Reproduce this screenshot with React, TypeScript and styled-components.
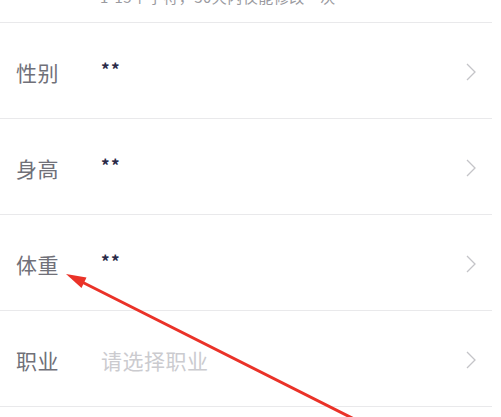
import styled, { createGlobalStyle } from "styled-components";

const GlobalStyle = createGlobalStyle`
  html, body {
    margin: 0;
    padding: 0;
    background: #ffffff;
    font-family: "Noto Sans CJK SC", "Noto Sans", sans-serif;
  }
`;

const Page = styled.main`
  position: relative;
  width: 501px;
  height: 417px;
  overflow: hidden;
  background: #ffffff;
`;

const List = styled.section`
  display: flex;
  flex-direction: column;
  padding-right: 9px;
`;

const Hint = styled.div`
  height: 22px;
  display: flex;
  align-items: flex-end;
  padding: 0 0 18px 100px;
  box-sizing: border-box;
  font-size: 15px;
  line-height: 15px;
  letter-spacing: 0.5px;
  color: #9a9aa0;
  white-space: nowrap;
`;

const Row = styled.div`
  height: 96px;
  box-sizing: border-box;
  border-top: 1px solid #e9e9eb;
  display: flex;
  align-items: center;
  padding: 2px 15px 0 16px;
`;

const Label = styled.span`
  width: 85px;
  flex-shrink: 0;
  font-size: 21px;
  color: #707078;
  letter-spacing: 0.5px;
`;

const Value = styled.span<{ $placeholder?: boolean }>`
  flex: 1;
  font-size: ${(p) => (p.$placeholder ? "21px" : "17px")};
  font-weight: ${(p) => (p.$placeholder ? 400 : 700)};
  color: ${(p) => (p.$placeholder ? "#cbcbcf" : "#2a2a48")};
  letter-spacing: ${(p) => (p.$placeholder ? "0.5px" : "1.5px")};
  margin-top: ${(p) => (p.$placeholder ? "0" : "-6px")};
`;

const Chevron = styled.svg`
  width: 12px;
  height: 18px;
  flex-shrink: 0;
`;

const Overlay = styled.svg`
  position: absolute;
  inset: 0;
  pointer-events: none;
`;

const rows = [
  { label: "性别", value: "**" },
  { label: "身高", value: "**" },
  { label: "体重", value: "**" },
  { label: "职业", value: "请选择职业", placeholder: true },
];

function Arrow() {
  return (
    <Chevron viewBox="0 0 12 18">
      <polyline points="2,1 10,9 2,17" fill="none" stroke="#c4c4c8" strokeWidth="1.3" />
    </Chevron>
  );
}

export default function App() {
  return (
    <>
      <GlobalStyle />
      <Page>
        <List>
          <Hint>1-15个字符，30天内仅能修改一次</Hint>
          {rows.map((row) => (
            <Row key={row.label}>
              <Label>{row.label}</Label>
              <Value $placeholder={row.placeholder}>{row.value}</Value>
              <Arrow />
            </Row>
          ))}
          <Row />
        </List>
        <Overlay width="501" height="417" viewBox="0 0 501 417">
          <line x1="362" y1="423" x2="80" y2="281" stroke="#ea3228" strokeWidth="3" strokeLinecap="round" />
          <polygon points="66,274 81.5,288 86.5,277.5" fill="#ea3228" />
        </Overlay>
      </Page>
    </>
  );
}
